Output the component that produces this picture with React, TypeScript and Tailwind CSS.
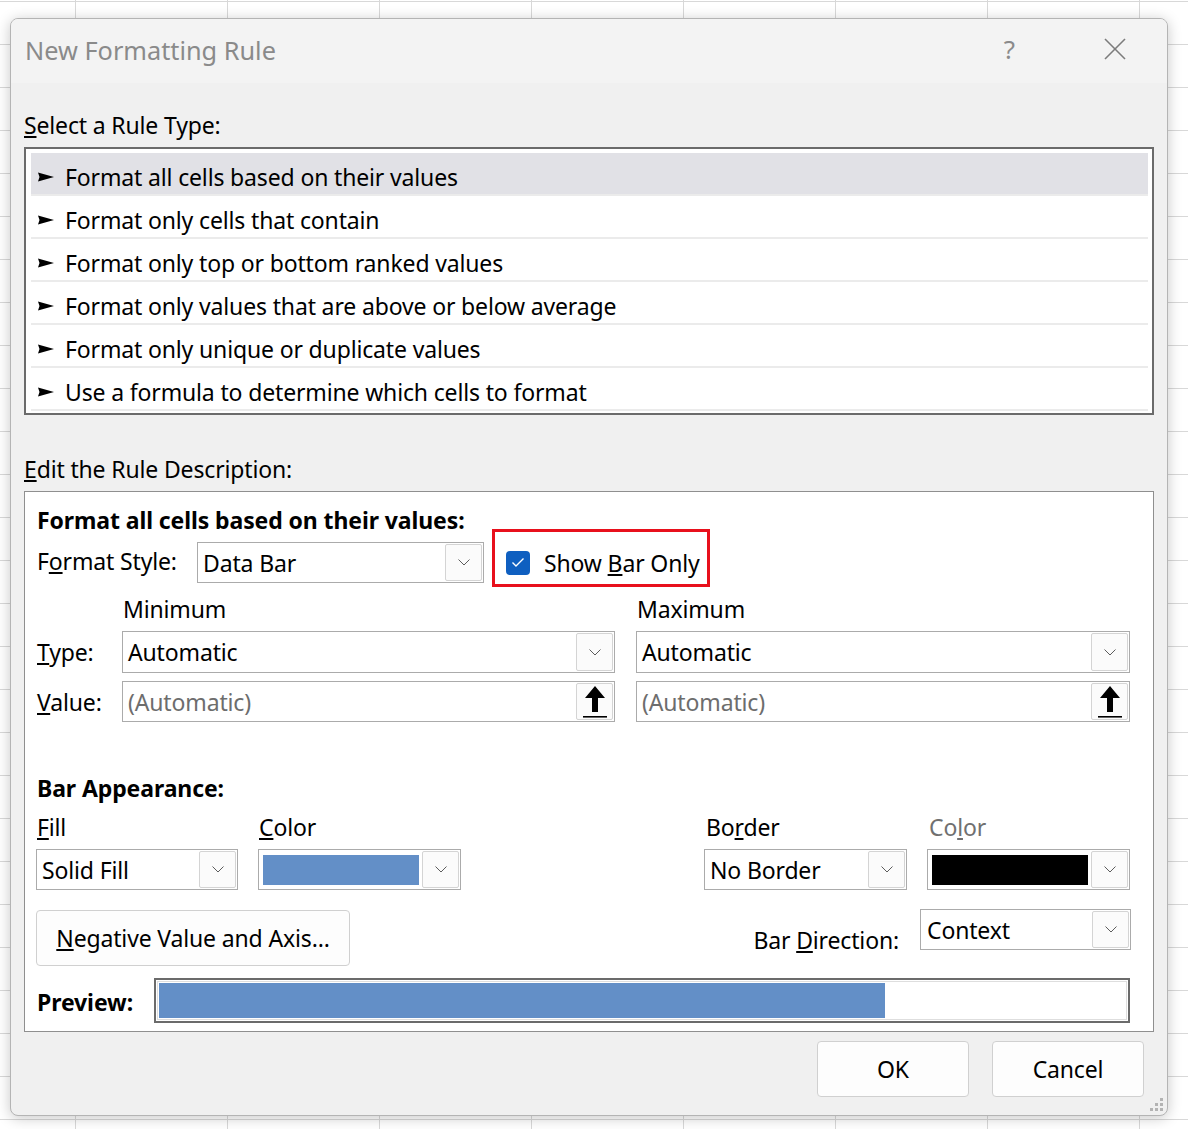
import React from "react";

const U = ({ children }: { children: React.ReactNode }) => (
  <span className="underline underline-offset-[2px] decoration-[1.5px]">{children}</span>
);

function Chevron() {
  return (
    <svg width="12" height="7" viewBox="0 0 12 7" fill="none">
      <polyline points="0.5,0.5 6,6 11.5,0.5" stroke="#5c5c5c" strokeWidth="1" />
    </svg>
  );
}

function UpArrow() {
  return (
    <svg width="26" height="34" viewBox="0 0 26 34">
      <polygon points="13,1 23,13 16,13 16,27 10,27 10,13 3,13" fill="#000" />
      <rect x="1" y="31" width="24" height="1.6" fill="#000" />
    </svg>
  );
}

function SideBtn({ children }: { children: React.ReactNode }) {
  return (
    <div className="w-[37px] self-stretch shrink-0 flex items-center justify-center border border-[#d4d4d4] rounded-[2px] bg-[#fbfbfb]">
      {children}
    </div>
  );
}

function Dropdown({
  className,
  children,
}: {
  className: string;
  children?: React.ReactNode;
}) {
  return (
    <div className={"h-[41px] flex border border-[#ababab] bg-white p-[1px] " + className}>
      <div className="flex-1 flex items-center pl-[4px] overflow-hidden whitespace-nowrap">
        {children}
      </div>
      <SideBtn>
        <Chevron />
      </SideBtn>
    </div>
  );
}

function ValueInput({ className }: { className: string }) {
  return (
    <div className={"h-[41px] flex border border-[#ababab] bg-white p-[1px] " + className}>
      <div className="flex-1 flex items-center pl-[4px] text-[#6d6d6d] whitespace-nowrap">
        (Automatic)
      </div>
      <SideBtn>
        <UpArrow />
      </SideBtn>
    </div>
  );
}

function RowArrow() {
  return (
    <svg width="16" height="10" viewBox="0 0 16 10" className="shrink-0">
      <polygon points="0,0.5 16,5 0,9.5 1.5,5" fill="#000" />
    </svg>
  );
}

const rules = [
  "Format all cells based on their values",
  "Format only cells that contain",
  "Format only top or bottom ranked values",
  "Format only values that are above or below average",
  "Format only unique or duplicate values",
  "Use a formula to determine which cells to format",
];

function Grip() {
  const dots = [
    [10, 0],
    [5, 5],
    [10, 5],
    [0, 10],
    [5, 10],
    [10, 10],
  ];
  return (
    <svg width="13" height="13" viewBox="0 0 13 13" className="absolute right-[4px] bottom-[4px]">
      {dots.map(([x, y], i) => (
        <rect key={i} x={x} y={y} width="3" height="3" fill="#b3b3b3" />
      ))}
    </svg>
  );
}

export default function App() {
  return (
    <div className="w-[1188px] h-[1129px] overflow-hidden pl-[10px] pt-[18px] bg-white bg-[linear-gradient(90deg,#d8d8d8_1px,transparent_1px),linear-gradient(180deg,#d8d8d8_1px,transparent_1px)] bg-[length:152px_43px] bg-[position:75px_1px] font-['Noto_Sans',sans-serif] text-[23px] leading-[32px] tracking-[-0.15px] text-black">
      <div className="relative w-[1158px] h-[1098px] rounded-[8px] border border-[#b4b4b4] bg-[#f0f0f0] overflow-hidden shadow-[0_2px_14px_rgba(0,0,0,0.22)] flex flex-col">
        {/* Title bar */}
        <div className="h-[64px] shrink-0 bg-[#f3f3f3] flex items-center pl-[14px]">
          <div className="text-[25.3px] tracking-normal text-[#8a8a8a] -mt-[2px]">New Formatting Rule</div>
          <div className="ml-auto flex items-center mr-[41px]">
            <div className="text-[26px] text-[#8a8a8a] leading-[30px] -mt-[4px]">?</div>
            <svg width="22" height="22" viewBox="0 0 22 22" className="ml-[89px] -mt-[4px]">
              <line x1="1" y1="1" x2="21" y2="21" stroke="#7c7c7c" strokeWidth="1.6" />
              <line x1="21" y1="1" x2="1" y2="21" stroke="#7c7c7c" strokeWidth="1.6" />
            </svg>
          </div>
        </div>

        {/* Body */}
        <div className="flex-1 px-[13px] pt-[26px]">
          <div className="h-[32px]">
            <U>S</U>elect a Rule Type:
          </div>
          <div className="mt-[6px] h-[268px] border-2 border-[#6b6b6b] bg-white pt-[4px] pl-[5px] pr-[4px]">
            {rules.map((r, i) => (
              <div
                key={r}
                className={
                  "h-[43px] flex items-center pl-[7px] pt-[6px] border-b-2 border-[#ebebeb] " +
                  (i === 0 ? "bg-[#e1e1e6]" : "")
                }
              >
                <RowArrow />
                <span className="ml-[11px] whitespace-nowrap">{r}</span>
              </div>
            ))}
          </div>

          <div className="mt-[38px] h-[32px]">
            <U>E</U>dit the Rule Description:
          </div>

          <div className="mt-[6px] h-[541px] border border-[#8f8f8f] bg-white pl-[12px] pr-[22px] pt-[12px]">
            <div className="h-[32px] font-bold tracking-[-0.1px] whitespace-nowrap">
              Format all cells based on their values:
            </div>

            <div className="mt-[6px] h-[41px] flex items-center">
              <div className="w-[160px] shrink-0 -mt-[4px]">
                F<U>o</U>rmat Style:
              </div>
              <Dropdown className="w-[287px]">Data Bar</Dropdown>
              <div className="relative ml-[22px] h-[41px] flex items-center">
                <div className="w-[24px] h-[24px] rounded-[4px] bg-[#0f5fc0] flex items-center justify-center">
                  <svg width="14" height="11" viewBox="0 0 14 11" fill="none">
                    <polyline points="1.5,5.5 5,9 12.5,1.5" stroke="#fff" strokeWidth="1.4" />
                  </svg>
                </div>
                <span className="ml-[14px] whitespace-nowrap">
                  Show <U>B</U>ar Only
                </span>
                <div className="absolute -left-[14px] -top-[13px] w-[218px] h-[58px] border-[3px] border-[#e8101c]" />
              </div>
            </div>

            <div className="mt-[10px] h-[32px] flex">
              <div className="ml-[86px] w-[514px]">Minimum</div>
              <div>Maximum</div>
            </div>

            <div className="mt-[6px] h-[42px] flex items-center">
              <div className="w-[85px] shrink-0">
                <U>T</U>ype:
              </div>
              <Dropdown className="w-[493px] h-[42px]">Automatic</Dropdown>
              <Dropdown className="ml-[21px] w-[494px] h-[42px]">Automatic</Dropdown>
            </div>

            <div className="mt-[8px] h-[41px] flex items-center">
              <div className="w-[85px] shrink-0">
                <U>V</U>alue:
              </div>
              <ValueInput className="w-[493px]" />
              <ValueInput className="ml-[21px] w-[494px]" />
            </div>

            <div className="mt-[50px] h-[32px] font-bold tracking-[-0.1px]">Bar Appearance:</div>

            <div className="mt-[7px] h-[32px] flex">
              <div className="w-[222px]">
                <U>F</U>ill
              </div>
              <div className="w-[447px]">
                <U>C</U>olor
              </div>
              <div className="w-[223px]">
                Bo<U>r</U>der
              </div>
              <div className="text-[#707070]">
                Co<U>l</U>or
              </div>
            </div>

            <div className="mt-[6px] h-[41px] flex -ml-[1px]">
              <Dropdown className="w-[202px]">Solid Fill</Dropdown>
              <Dropdown className="ml-[20px] w-[203px]">
                <div className="w-[156px] h-[30px] -ml-[1px] bg-[#638fc7]" />
              </Dropdown>
              <Dropdown className="ml-[243px] w-[203px]">No Border</Dropdown>
              <Dropdown className="ml-[20px] w-[203px]">
                <div className="w-[156px] h-[30px] -ml-[1px] bg-black" />
              </Dropdown>
            </div>

            <div className="mt-[20px] h-[56px] flex items-start">
              <div className="w-[314px] h-[56px] -ml-[1px] rounded-[4px] border border-[#d0d0d0] bg-[#fdfdfd] flex items-center justify-center whitespace-nowrap">
                <span>
                  <U>N</U>egative Value and Axis...
                </span>
              </div>
              <div className="ml-auto flex items-start">
                <div className="mt-[14px] h-[32px] whitespace-nowrap">
                  Bar <U>D</U>irection:
                </div>
                <Dropdown className="ml-[21px] -mt-[1px] w-[211px]">
                  <span className="ml-[1px]">Context</span>
                </Dropdown>
              </div>
            </div>

            <div className="mt-[12px] h-[45px] flex items-center">
              <div className="w-[117px] shrink-0 font-bold tracking-[-0.1px] mt-[2px]">Preview:</div>
              <div className="w-[976px] h-[45px] border-2 border-[#6b6b6b] bg-white p-[1px]">
                <div className="w-full h-full border border-[#dedede] p-[1px]">
                  <div className="w-[726px] h-full bg-[#638fc7]" />
                </div>
              </div>
            </div>
          </div>

          <div className="mt-[9px] flex justify-end gap-[23px] pr-[10px]">
            <div className="w-[152px] h-[56px] rounded-[4px] border border-[#d0d0d0] bg-[#fdfdfd] flex items-center justify-center">
              OK
            </div>
            <div className="w-[152px] h-[56px] rounded-[4px] border border-[#d0d0d0] bg-[#fdfdfd] flex items-center justify-center">
              Cancel
            </div>
          </div>
        </div>
        <Grip />
      </div>
    </div>
  );
}
